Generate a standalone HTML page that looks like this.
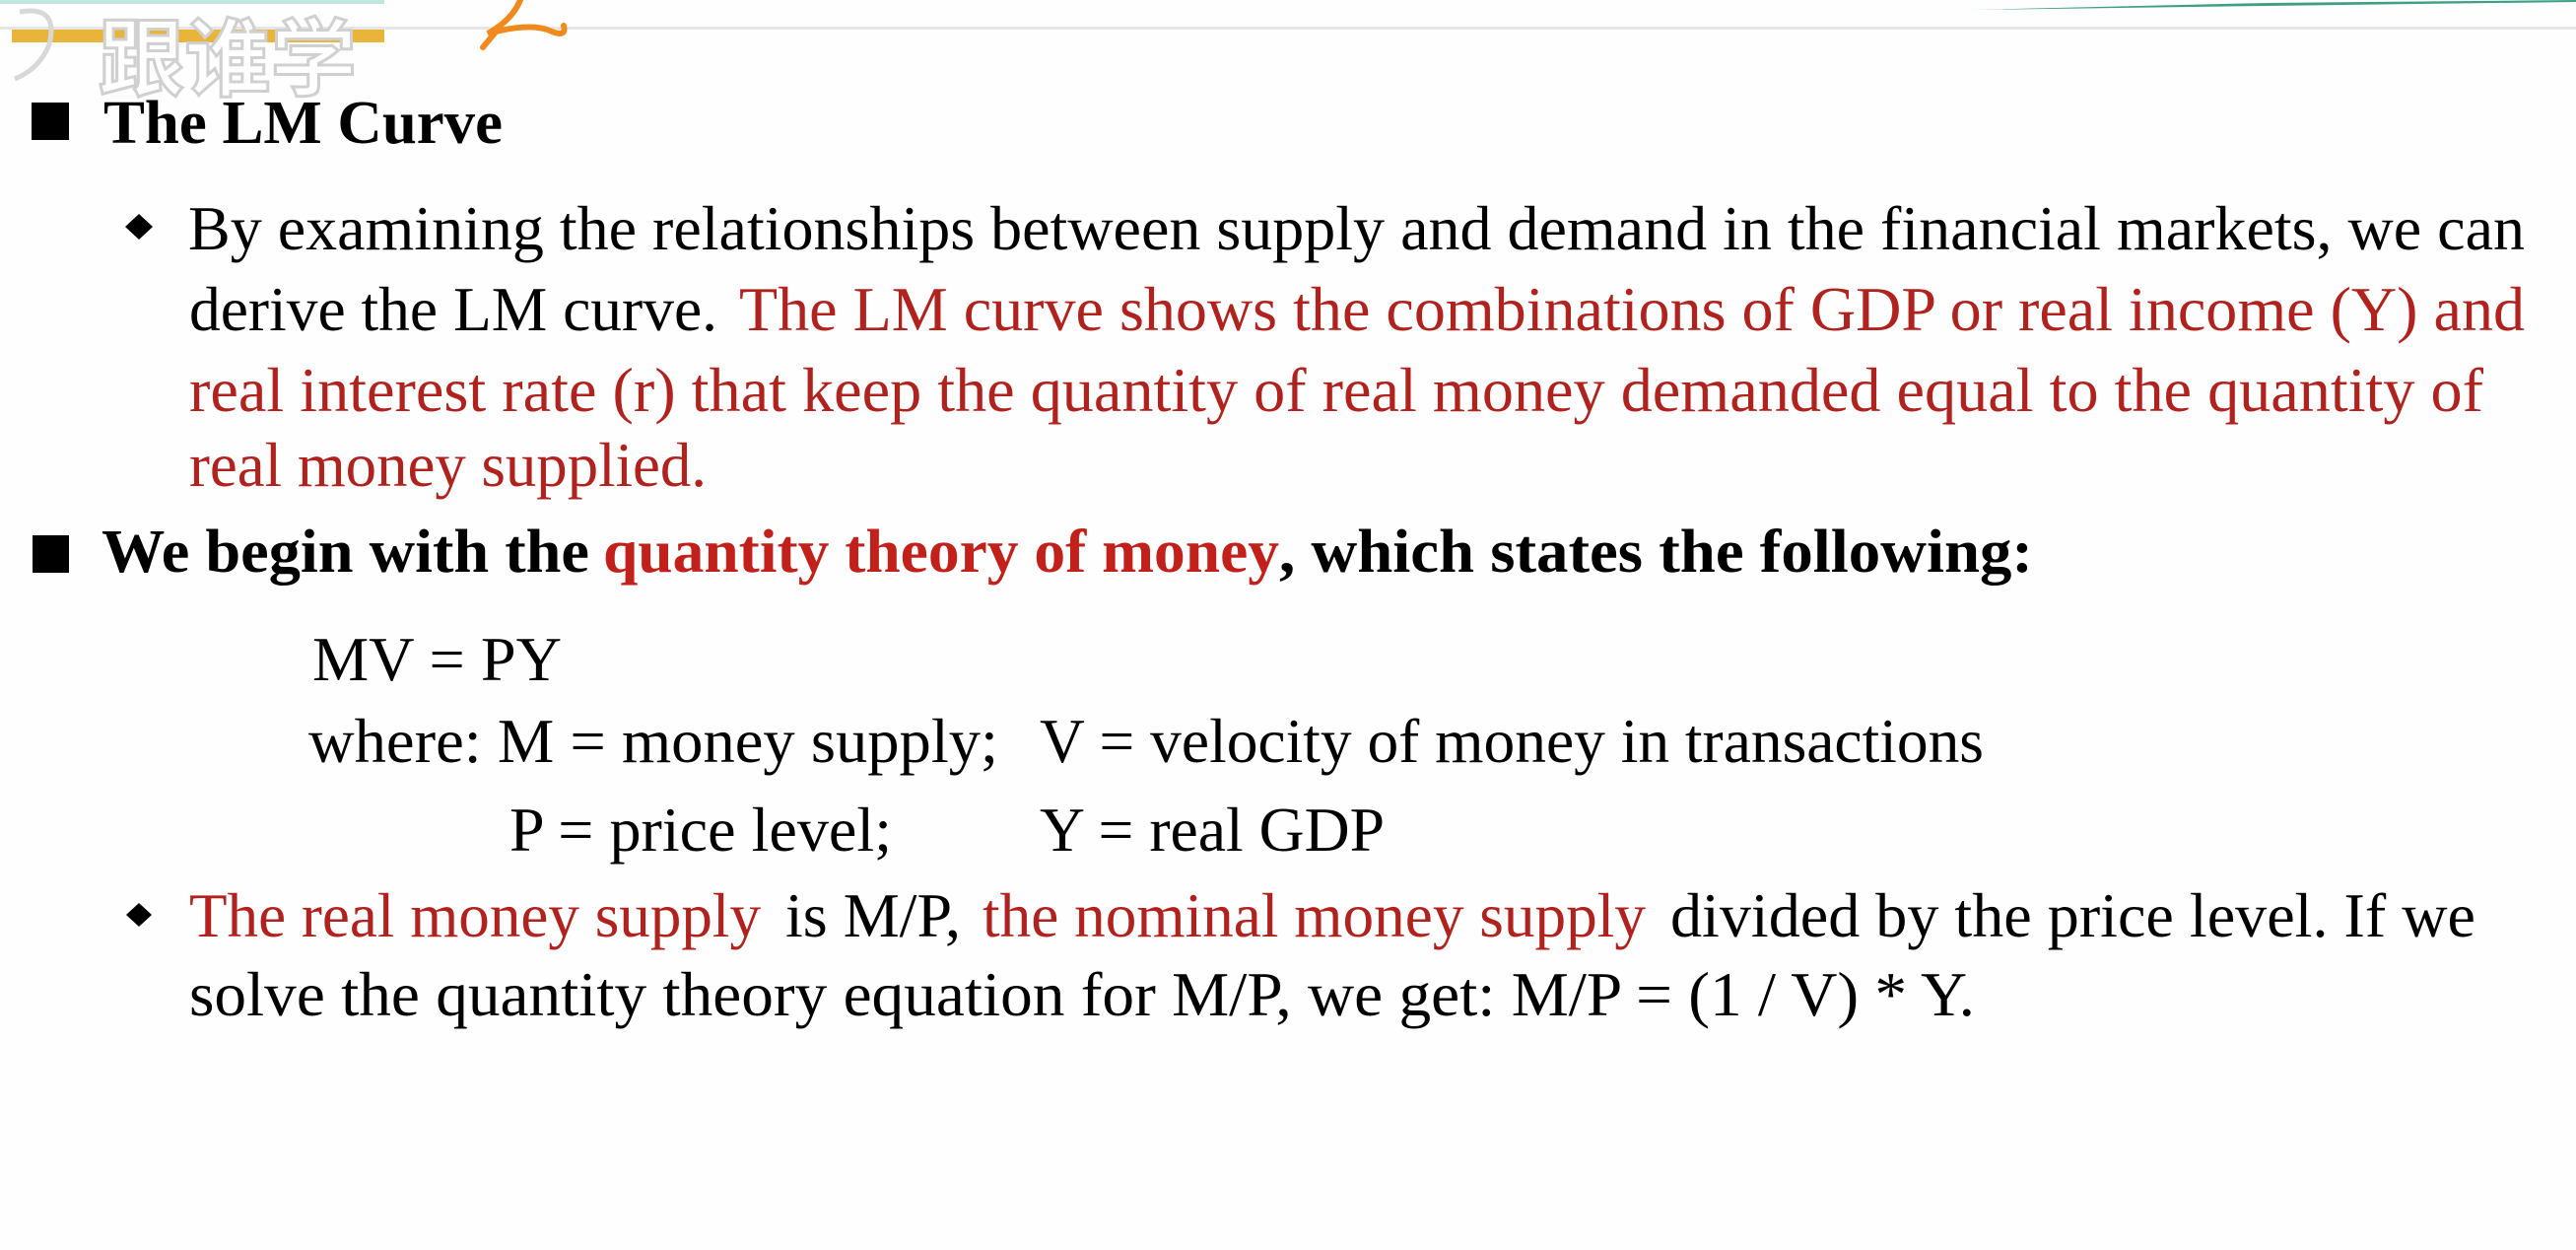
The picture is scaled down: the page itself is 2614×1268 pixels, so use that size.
<!DOCTYPE html>
<html><head><meta charset="utf-8"><style>
html,body{margin:0;padding:0;background:#fff;}
svg{display:block;}
text{font-family:"Liberation Serif",serif;}
</style></head><body>
<svg width="2614" height="1268" viewBox="0 0 2614 1268" xmlns="http://www.w3.org/2000/svg">
<rect width="2614" height="1268" fill="#fefefe"/>
<!-- header -->
<rect x="0" y="0" width="390" height="4" fill="#8fd6c8" opacity="0.6"/>
<rect x="0" y="27" width="2614" height="3" fill="#e6e6e6"/>
<rect x="12" y="30" width="378" height="13" fill="#e8b43a"/>
<path d="M2000 10 L2300 3 L2614 0 L2614 2 L2300 6 Z" fill="#3f9f86"/>
<path d="M528 0 Q520 20 495 34 Q540 22 560 32 Q575 38 572 26 M505 30 Q495 42 490 48" stroke="#f08a1c" stroke-width="6" fill="none" stroke-linecap="round"/>
<text x="100" y="90" font-size="86" font-weight="bold" fill="#ffffff" stroke="#d0d0d0" stroke-width="3" textLength="262" lengthAdjust="spacingAndGlyphs" style="font-family:'Noto Sans CJK SC',sans-serif">跟谁学</text>
<path d="M20 12 Q60 5 50 45 Q40 70 15 80" stroke="#d8d8d8" stroke-width="5" fill="none"/>
<!-- bullets -->
<rect x="32" y="104" width="38" height="38" fill="#000"/>
<rect x="33" y="543" width="37" height="38" fill="#000"/>
<path d="M141 217 L155 230 L141 243 L127 230 Z" fill="#000"/>
<path d="M141 916 L154 928 L141 940 L128 928 Z" fill="#000"/>
<g font-size="64">
<text x="105" y="145" font-weight="bold" font-size="62" textLength="405" lengthAdjust="spacingAndGlyphs">The LM Curve</text>
<text x="191" y="253" textLength="2371" lengthAdjust="spacingAndGlyphs">By examining the relationships between supply and demand in the financial markets, we can</text>
<text x="192" y="335" textLength="536" lengthAdjust="spacingAndGlyphs">derive the LM curve.</text>
<text x="750" y="335" fill="#b0221e" textLength="1812" lengthAdjust="spacingAndGlyphs">The LM curve shows the combinations of GDP or real income (Y) and</text>
<text x="192" y="417" fill="#b0221e" textLength="2328" lengthAdjust="spacingAndGlyphs">real interest rate (r) that keep the quantity of real money demanded equal to the quantity of</text>
<text x="192" y="493" fill="#b0221e" textLength="525" lengthAdjust="spacingAndGlyphs">real money supplied.</text>
<text x="103" y="580" font-weight="bold" font-size="62" textLength="495" lengthAdjust="spacingAndGlyphs">We begin with the</text>
<text x="612" y="580" font-weight="bold" font-size="62" fill="#c2211b" textLength="686" lengthAdjust="spacingAndGlyphs">quantity theory of money</text>
<text x="1298" y="580" font-weight="bold" font-size="62" textLength="765" lengthAdjust="spacingAndGlyphs">, which states the following:</text>
<text x="317" y="690" textLength="253" lengthAdjust="spacingAndGlyphs">MV = PY</text>
<text x="313" y="773" textLength="700" lengthAdjust="spacingAndGlyphs">where:  M = money supply;</text>
<text x="1055" y="773" textLength="958" lengthAdjust="spacingAndGlyphs">V = velocity of money in transactions</text>
<text x="517" y="863" textLength="388" lengthAdjust="spacingAndGlyphs">P = price level;</text>
<text x="1055" y="863" textLength="350" lengthAdjust="spacingAndGlyphs">Y = real GDP</text>
<text x="192" y="950" fill="#b0221e" textLength="580" lengthAdjust="spacingAndGlyphs">The real money supply</text>
<text x="797" y="950" textLength="178" lengthAdjust="spacingAndGlyphs">is M/P,</text>
<text x="997" y="950" fill="#b0221e" textLength="673" lengthAdjust="spacingAndGlyphs">the nominal money supply</text>
<text x="1695" y="950" textLength="817" lengthAdjust="spacingAndGlyphs">divided by the price level. If we</text>
<text x="192" y="1030" textLength="1812" lengthAdjust="spacingAndGlyphs">solve the quantity theory equation for M/P, we get:  M/P = (1 / V) * Y.</text>
</g>
</svg>
</body></html>
